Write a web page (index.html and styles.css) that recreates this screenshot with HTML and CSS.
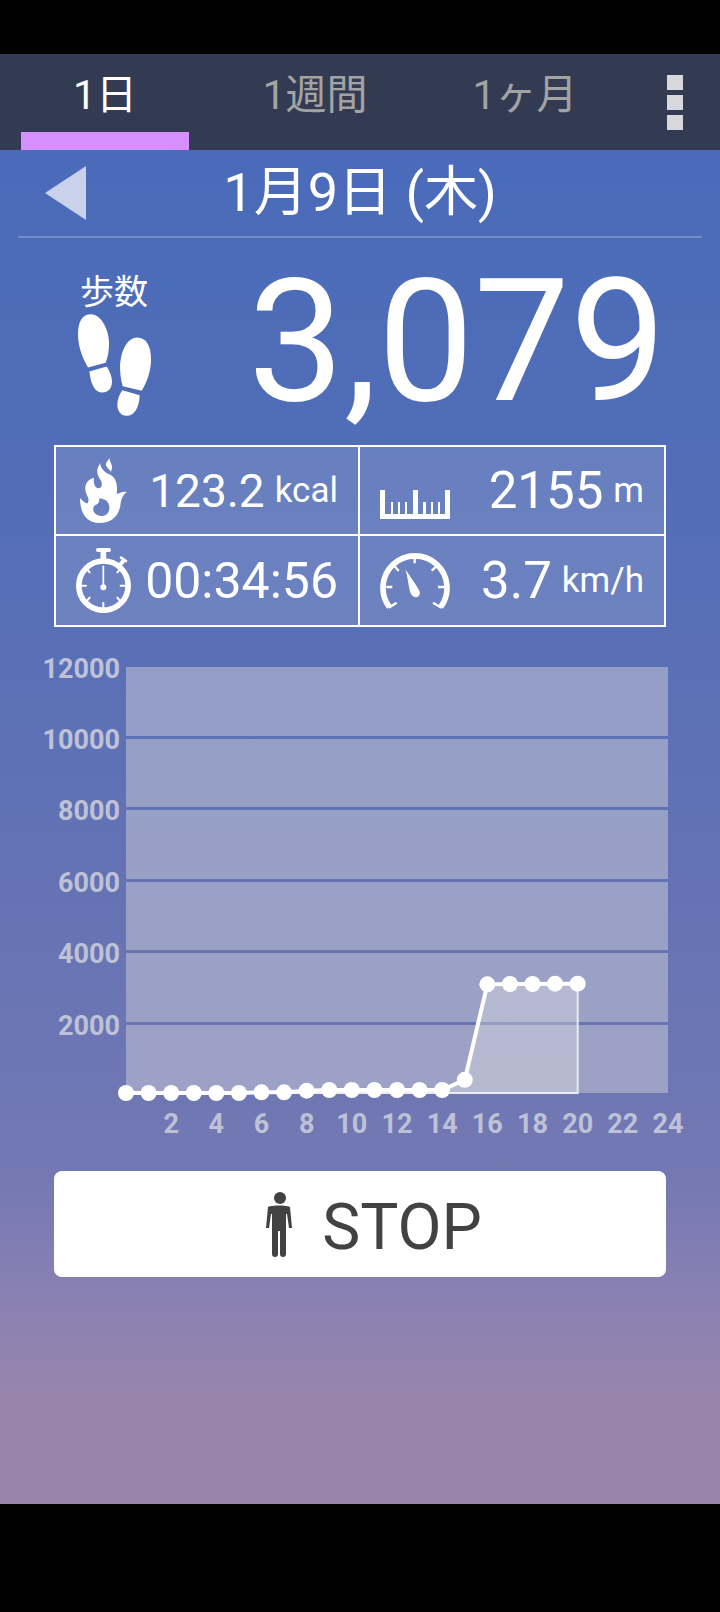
FILE: index.html
```
<!DOCTYPE html>
<html lang="ja">
<head>
  <meta charset="UTF-8">
  <meta name="viewport" content="width=device-width, initial-scale=1">
  <title>歩数計</title>
  <link rel="stylesheet" href="styles.css">
</head>
<body>
  <header class="tab-bar">
    <nav class="tabs">
      <button class="tab active" type="button">1日</button>
      <button class="tab" type="button">1週間</button>
      <button class="tab" type="button">1ヶ月</button>
    </nav>
    <button class="menu-button" type="button" aria-label="メニュー">
      <span class="menu-dot"></span>
      <span class="menu-dot"></span>
      <span class="menu-dot"></span>
    </button>
  </header>

  <main class="screen">
    <div class="date-bar">
      <button class="prev-button" type="button" aria-label="前の日">
        <svg width="41" height="54" viewBox="0 0 41 54"><path d="M0 27L41 0V54Z" fill="#c9d2ea"/></svg>
      </button>
      <h1 class="date">1月9日 (木)</h1>
    </div>

    <section class="steps">
      <div class="steps-label">
        <h2>歩数</h2>
        <svg width="73" height="102" viewBox="114 191 219 305" fill="#fff">
          <path d="M153 191C179 191 203 226 207 272C208 298 204 318 197 337L144 351C126 321 114 288 114 250C114 213 127 191 153 191Z"/>
          <path d="M148 363L200 348C209 361 216 378 216 394C216 413 205 426 187 426C166 426 153 406 148 363Z"/>
          <path d="M292 261C320 261 333 289 333 326C333 362 321 394 305 421L248 407C242 386 240 366 240 345C243 298 263 261 292 261Z"/>
          <path d="M247 419L299 434C298 470 284 496 259 496C242 496 232 481 232 463C232 447 238 431 247 419Z"/>
        </svg>
      </div>
      <div class="steps-count">3,079</div>
    </section>

    <section class="stats">
      <div class="stat">
        <div class="stat-icon">
          <svg width="47" height="65" viewBox="122 72 141 195" fill="#fff">
            <path fill-rule="evenodd" d="M182 86C184 102 194 114 210 121C229 130 236 150 232 180C240 179 248 171 263 174C254 180 247 190 244 207C241 244 219 267 180 267C144 267 122 240 122 192C129 199 136 208 145 208C150 199 147 190 142 182C133 162 137 138 164 131C161 144 166 163 177 163C187 163 190 151 185 140C177 129 172 118 174 106C175 98 180 95 182 86ZM180 193C181 206 174 211 167 214C156 222 162 246 187 246C206 246 213 228 209 213C206 200 195 195 180 193Z"/>
            <path d="M211 72C210 83 219 91 218 101C218 106 216 110 214 113C209 104 199 100 200 90C201 82 208 79 211 72Z"/>
          </svg>
        </div>
        <div class="stat-value calories">123.2 <span class="unit">kcal</span></div>
      </div>
      <div class="stat">
        <div class="stat-icon ruler">
          <svg width="70" height="29" viewBox="0 0 70 29" fill="#fff">
            <path d="M0 0H5V24H11V12H13V24H18V12H20V24H25V12H27V24H33V0H38V24H43V12H46V24H51V12H53V24H58V12H60V24H65V0H70V29H0Z"/>
          </svg>
        </div>
        <div class="stat-value">2155 <span class="unit">m</span></div>
      </div>
      <div class="stat">
        <div class="stat-icon">
          <svg width="55" height="65" viewBox="105 342 165 195" fill="none" stroke="#fff">
            <circle cx="187.500" cy="455" r="74" stroke-width="17"/>
            <path d="M187 349V376" stroke-width="17"/>
            <path d="M171 348H204" stroke-width="12" stroke-linecap="round"/>
            <path d="M232 398L248 380" stroke-width="12"/>
            <path d="M240 371L255 381" stroke-width="8" stroke-linecap="round"/>
            <path d="M187 397V455" stroke-width="5" stroke-linecap="round"/>
            <circle cx="187" cy="460" r="9" fill="#fff" stroke="none"/>
            <path d="M120 455H135M239 455H255M187 507V524M138 406L146 415M237 406L229 415M136 502L146 491M238 502L229 491" stroke-width="6" stroke-linecap="round"/>
          </svg>
        </div>
        <div class="stat-value time">00:34:56</div>
      </div>
      <div class="stat">
        <div class="stat-icon">
          <svg width="70" height="57" viewBox="93 352 210 171" fill="none" stroke="#fff">
            <path d="M121 517A96 96 0 1 1 275 517" stroke-width="17"/>
            <path d="M112 457H130M267 457H285M197 367V386M137 395L149 409M262 395L248 408" stroke-width="7"/>
            <path d="M119 519L143 504M277 519L252 504" stroke-width="7"/>
            <path d="M169 404C187 431 202 451 211 468C217 484 203 492 192 485C178 475 181 443 169 404Z" fill="#fff" stroke="none"/>
          </svg>
        </div>
        <div class="stat-value">3.7 <span class="unit">km/h</span></div>
      </div>
    </section>

    <svg class="chart" viewBox="0 0 720 500" role="img" aria-label="時間ごとの歩数">
      <!-- bands between the grid lines -->
      <g class="bands">
        <rect x="126" y="17" width="542" height="69"/>
        <rect x="126" y="89" width="542" height="68"/>
        <rect x="126" y="160" width="542" height="69"/>
        <rect x="126" y="232" width="542" height="68"/>
        <rect x="126" y="303" width="542" height="69"/>
        <rect x="126" y="375" width="542" height="68"/>
      </g>
      <g class="y-labels">
        <text x="120" y="28">12000</text>
        <text x="120" y="99">10000</text>
        <text x="120" y="170">8000</text>
        <text x="120" y="242">6000</text>
        <text x="120" y="313">4000</text>
        <text x="120" y="385">2000</text>
      </g>
      <g class="x-labels" id="xLabels"></g>
      <path class="area" id="area"/>
      <path class="line" id="line"/>
      <g class="dots" id="dots"></g>
    </svg>

    <button class="stop-button" type="button">
      <svg width="26" height="65" viewBox="0 0 26 65" fill="#424242">
        <ellipse cx="14" cy="6" rx="6" ry="6"/>
        <path d="M2 15C6 13 20 13 24 15L26 36H23L21 22H20V62Q20 65 17 65Q14 65 14 62V39H12V62Q12 65 9 65Q6 65 6 62V22H5L3 36H0Z"/>
      </svg>
      <span class="stop-text">STOP</span>
    </button>
  </main>

  <script>
    const NS = 'http://www.w3.org/2000/svg';
    // cumulative steps for each hour
    const steps = [0, 0, 0, 0, 0, 0, 20, 20, 65, 85, 85, 85, 85, 85, 85, 370, 3060, 3070, 3070, 3079, 3079];
    const px = hour => 126 + hour * 542 / 24;
    const py = value => 443 - value * 426 / 12000;

    function add(parent, tag, attrs, text) {
      const el = document.createElementNS(NS, tag);
      for (const key in attrs) el.setAttribute(key, attrs[key]);
      if (text) el.textContent = text;
      document.getElementById(parent).appendChild(el);
    }

    for (let hour = 2; hour <= 24; hour += 2) {
      add('xLabels', 'text', { x: px(hour), y: 483 }, String(hour));
    }

    const points = steps.map((value, hour) => px(hour) + ' ' + py(value));
    document.getElementById('line').setAttribute('d', 'M' + points.join('L'));
    document.getElementById('area').setAttribute('d',
      'M' + points.join('L') + 'L' + px(steps.length - 1) + ' 443L126 443Z');
    steps.forEach((value, hour) => add('dots', 'circle', { cx: px(hour), cy: py(value), r: 8 }));
  </script>
</body>
</html>
```
FILE: styles.css
```
* {
  box-sizing: border-box;
}
body {
  margin: 0;
  padding: 54px 0 108px;
  min-height: 100vh;
  display: flex;
  flex-direction: column;
  background-color: #000;
  color: #fff;
  font-family: Roboto, "Noto Sans CJK JP", sans-serif;
}
button {
  margin: 0;
  padding: 0;
  border: none;
  background: none;
  color: inherit;
  font-family: inherit;
  cursor: pointer;
}
svg {
  display: block;
}
.tab-bar {
  display: flex;
  height: 96px;
  background-color: #323b52;
}
.tabs {
  flex: 7;
  display: flex;
}
.tab {
  flex: 1;
  display: flex;
  flex-direction: column;
  align-items: center;
  padding-top: 11px;
  font-size: 41px;
  line-height: 60px;
  color: #a3a3a3;
}
.tab.active {
  color: #fff;
}
.tab.active::after {
  content: "";
  width: 80%;
  height: 18px;
  margin-top: 7px;
  background-color: #d58fff;
}
.menu-button {
  flex: 1;
  display: flex;
  flex-direction: column;
  align-items: center;
  justify-content: center;
  gap: 5px;
}
.menu-dot {
  width: 16px;
  height: 15px;
  background-color: #d6d8de;
}
.screen {
  flex: 1;
  background: linear-gradient(#4a6bba 0%, #506db7 20%, #5a70b6 38%, #6372b5 52%, #6f77b3 70%, #7479b3 76%, #8880b3 84%, #9785ad 92%, #9785ad 100%);
}
.date-bar {
  display: grid;
  grid-template-columns: 68px 1fr 68px;
  align-items: center;
  height: 88px;
  margin: 0 18px;
  border-bottom: 2px solid #738dc9;
}
.prev-button {
  display: flex;
  justify-content: flex-end;
}
.date {
  margin: 0;
  font-size: 54px;
  font-weight: 400;
  line-height: 80px;
  text-align: center;
}
.steps {
  display: flex;
  justify-content: space-between;
  margin: 0 54px;
  height: 207px;
}
.steps-label {
  display: flex;
  flex-direction: column;
  align-items: center;
  width: 120px;
  padding-top: 34px;
}
.steps-label h2 {
  margin: 0 0 2px;
  font-size: 34px;
  font-weight: 400;
  line-height: 40px;
}
.steps-count {
  padding-top: 4px;
  font-size: 171px;
  line-height: 200px;
}
.stats {
  display: grid;
  grid-template-columns: 1fr 1fr;
  grid-template-rows: 89px 89px;
  margin: 0 54px;
  border: 2px solid #fff;
  background-color: rgba(255, 255, 255, 0.13);
}
.stat {
  display: flex;
  align-items: center;
  justify-content: space-between;
  padding: 0 20px;
}
.stat:nth-child(odd) {
  padding-left: 12px;
  border-right: 2px solid #fff;
}
.stat:nth-child(-n+2) {
  border-bottom: 2px solid #fff;
}
.stat-icon {
  display: flex;
  justify-content: center;
  width: 70px;
}
.stat-icon.ruler {
  padding-top: 28px;
}
.stat-value {
  display: flex;
  align-items: center;
  gap: 10px;
  font-size: 51px;
  line-height: 60px;
}
.stat-value.time {
  font-size: 50px;
}
.stat-value.calories {
  font-size: 46px;
}
.unit {
  font-size: 35px;
}
.chart {
  width: 100%;
  margin-top: 23px;
}
.bands {
  fill: #c7c8d6;
  fill-opacity: 0.53;
}
.y-labels, .x-labels {
  fill: #bfc2d6;
  font-size: 27px;
  font-weight: 700;
}
.y-labels {
  text-anchor: end;
}
.x-labels {
  text-anchor: middle;
}
.area {
  fill: rgba(230, 230, 230, 0.35);
  stroke: #e9eaf2;
  stroke-width: 2;
}
.line {
  fill: none;
  stroke: #fff;
  stroke-width: 4;
}
.dots {
  fill: #fff;
}
.stop-button {
  display: flex;
  align-items: center;
  justify-content: center;
  gap: 30px;
  width: calc(100% - 108px);
  height: 106px;
  margin: 21px 54px 0;
  padding-left: 28px;
  border-radius: 8px;
  background-color: #fff;
  color: #424242;
  font-size: 64px;
}
.stop-text {
  padding-top: 6px;
}
```
